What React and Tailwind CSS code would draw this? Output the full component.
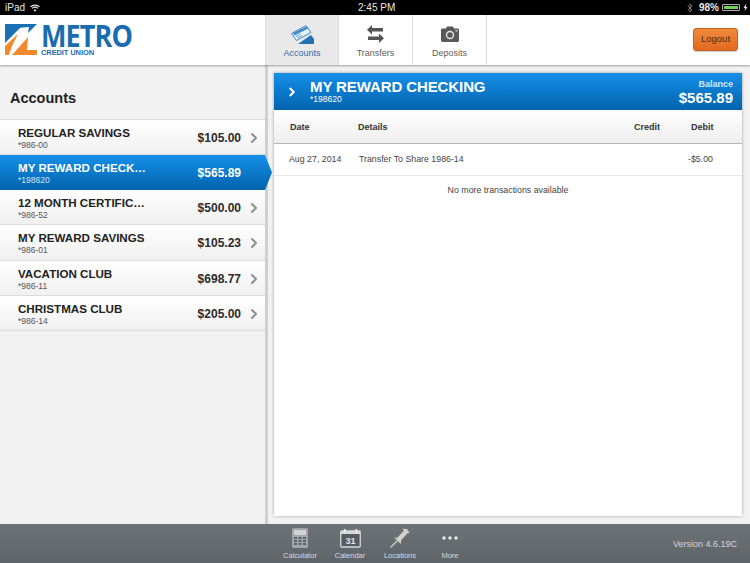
import { ChevronRight, Bluetooth } from 'lucide-react';

const accounts = [
  { name: 'REGULAR SAVINGS', no: '*986-00', amount: '$105.00', h: 'h-[35px]' },
  { name: 'MY REWARD CHECK…', no: '*198620', amount: '$565.89', h: 'h-[35px]', active: true },
  { name: '12 MONTH CERTIFIC…', no: '*986-52', amount: '$500.00', h: 'h-[35px]' },
  { name: 'MY REWARD SAVINGS', no: '*986-01', amount: '$105.23', h: 'h-[36px]' },
  { name: 'VACATION CLUB', no: '*986-11', amount: '$698.77', h: 'h-[35px]' },
  { name: 'CHRISTMAS CLUB', no: '*986-14', amount: '$205.00', h: 'h-[35px]' },
];

function StatusBar() {
  return (
    <div className="h-[15px] bg-black text-[#e8e8e8] text-[10px] leading-[15px] flex items-center justify-between pl-[5px] pr-[2px] relative">
      <div className="flex items-center gap-[5px]">
        <span>iPad</span>
        <svg width="10" height="8" viewBox="0 0 10 8" fill="none" stroke="#e8e8e8">
          <path d="M0.6 2.8C3 0.5 7 0.5 9.4 2.8" strokeWidth="1.2" />
          <path d="M2.2 4.4C3.8 3 6.2 3 7.8 4.4" strokeWidth="1.2" />
          <path d="M5 7.6L3.6 6C4.4 5.3 5.6 5.3 6.4 6Z" fill="#e8e8e8" strokeWidth="0.3" />
        </svg>
      </div>
      <span className="absolute left-[358px] top-0 font-medium">2:45 PM</span>
      <div className="flex items-center gap-[3px]">
        <Bluetooth size={10} className="text-[#8a8a8a] mr-[1px]" />
        <span className="font-bold">98%</span>
        <div className="w-[18px] h-[7px] border border-[#aaa] rounded-[1px] p-[1px]">
          <div className="h-full w-[14px] bg-[#6fd05a]" />
        </div>
        <svg width="5" height="7" viewBox="0 0 5 7"><path d="M3 0L0.5 4H2L1.6 7L4.5 3H3Z" fill="#ddd" /></svg>
      </div>
    </div>
  );
}

function Logo() {
  return (
    <div className="w-[265px] flex items-start pl-[5px] pt-[9px] gap-[4px]">
      <svg width="32" height="31" viewBox="0 0 32 31">
        <path d="M0 0H32L23 9L24 3L13 4L0 17Z" fill="#1a6fb5" />
        <path d="M0 0H15V4L0 19Z" fill="#1a6fb5" />
        <path d="M0 31V22L13 10L7 22L4 31Z" fill="#f08a2c" />
        <path d="M7 31L23 13L22 26H32V31Z" fill="#f08a2c" />
      </svg>
      <div className="text-[#1a6cb0] leading-none">
        <div className="text-[30px] font-bold h-[24px] leading-[24px] tracking-[-1px] scale-x-[0.9] origin-left font-['Open_Sans','Liberation_Sans',sans-serif]">METRO</div>
        <div className="text-[7.5px] font-bold mt-[1px] tracking-[-0.1px]">CREDIT UNION</div>
      </div>
    </div>
  );
}

function Tab({ label, active, children, width }) {
  return (
    <div className={`${width} h-full flex flex-col items-center border-r border-[#dcdcdc] ${active ? 'bg-[#e9e9e9]' : 'bg-white'}`}>
      <div className="h-[30px] mt-[4px] flex items-center justify-center">{children}</div>
      <span className={`text-[9px] leading-[11px] mt-[-1px] ${active ? 'text-[#2f6ea5]' : 'text-[#5e5e5e]'}`}>{label}</span>
    </div>
  );
}

function Header() {
  return (
    <div className="h-[50px] bg-white flex shadow-[0_1px_2px_rgba(0,0,0,0.35)] relative z-10">
      <Logo />
      <div className="flex border-l border-[#dcdcdc]">
        <Tab label="Accounts" active width="w-[73px]">
          <svg width="23" height="19" viewBox="0 0 23 19">
            <path d="M0.5 8.5L15 0.5L20 7.5L5.5 15.5Z" fill="#e6f0f8" stroke="#3f8ac6" strokeWidth="1" />
            <path d="M2 8L15.5 1.5L17 3.5L3.5 10.5Z" fill="#3f8ac6" />
            <path d="M5 11.5L9.5 9M6.5 13L11 10.5" stroke="#3f8ac6" strokeWidth="0.8" />
            <path d="M7 19L20 10L23 14V19Z" fill="#2372b2" />
          </svg>
        </Tab>
        <Tab label="Transfers" width="w-[74px]">
          <svg width="17" height="18" viewBox="0 0 17 18" fill="#555">
            <path d="M5 0V3H16V6.5H5V9.5L0 4.8Z" />
            <path d="M12 8.5V11.5H1V15H12V18L17 13.2Z" />
          </svg>
        </Tab>
        <Tab label="Deposits" width="w-[74px]">
          <svg width="18" height="16" viewBox="0 0 18 16">
            <path d="M1.5 2.5H5L6 0.5H12L13 2.5H16.5C17.3 2.5 18 3.2 18 4V14.5C18 15.3 17.3 16 16.5 16H1.5C0.7 16 0 15.3 0 14.5V4C0 3.2 0.7 2.5 1.5 2.5Z" fill="#595959" />
            <circle cx="9" cy="9" r="4.2" fill="#e6e6e6" />
            <circle cx="9" cy="9" r="2.8" fill="#595959" />
            <rect x="14.5" y="4" width="2" height="1.5" fill="#ddd" />
          </svg>
        </Tab>
      </div>
      <div className="flex-1 flex items-start justify-end pr-[12px] pt-[13px]">
        <button className="w-[45px] h-[23px] rounded-[3px] border border-[#c9601a] bg-gradient-to-b from-[#f08a3c] to-[#e2691e] text-[9.5px] text-[#4a2a14] shadow-[0_1px_1px_rgba(0,0,0,0.2)]">
          Logout
        </button>
      </div>
    </div>
  );
}

function AccountRow({ account }) {
  if (account.active) {
    return (
      <div className={`${account.h} relative flex items-center pl-[18px] pr-[24px] bg-gradient-to-b from-[#1590e8] to-[#0463ae] text-white`}>
        <div className="flex-1 min-w-0 pt-[1px]">
          <div className="text-[11.6px] font-bold leading-[14px]">{account.name}</div>
          <div className="text-[8.5px] leading-[10px] text-[#cfe6f8]">{account.no}</div>
        </div>
        <span className="text-[12px] font-bold mt-[1px]">{account.amount}</span>
        <div className="absolute left-full top-0 h-full w-[7px] bg-gradient-to-b from-[#1590e8] to-[#0463ae] [clip-path:polygon(0_0,100%_50%,0_100%)]" />
      </div>
    );
  }
  return (
    <div className={`${account.h} flex items-center pl-[18px] pr-[3px] bg-gradient-to-b from-white to-[#f0f0f0] border-b border-[#dcdcdc]`}>
      <div className="flex-1 min-w-0 pt-[1px]">
        <div className="text-[11.6px] font-bold leading-[14px] text-[#222]">{account.name}</div>
        <div className="text-[8.5px] leading-[10px] text-[#555]">{account.no}</div>
      </div>
      <span className="text-[12px] font-bold text-[#2b2b2b] mt-[1px]">{account.amount}</span>
      <ChevronRight size={16} strokeWidth={3} className="text-[#8f8f8f] ml-[5px] mt-[1px]" />
    </div>
  );
}

function Sidebar() {
  return (
    <div className="w-[265px] shrink-0 relative z-[5]">
      <div className="h-[55px] flex items-center pl-[10px] pt-[14px] border-b border-[#dedede] text-[14.5px] font-bold text-[#222]">Accounts</div>
      {accounts.map((a) => (
        <AccountRow key={a.name} account={a} />
      ))}
    </div>
  );
}

function Detail() {
  return (
    <div className="ml-[6px] mt-[8px] mb-[8px] w-[468px] bg-white flex flex-col shadow-[0_0_3px_rgba(0,0,0,0.35)]">
      <div className="h-[37px] flex items-center bg-gradient-to-b from-[#1590e8] to-[#0463ae] text-white pl-[11px] pr-[9px]">
        <ChevronRight size={14} strokeWidth={3.5} />
        <div className="ml-[11px] flex-1">
          <div className="text-[15px] font-bold leading-[17px] tracking-[-0.1px] mt-[-1px]">MY REWARD CHECKING</div>
          <div className="text-[8.5px] leading-[9px] font-medium">*198620</div>
        </div>
        <div className="text-right pt-[2px]">
          <div className="text-[9px] font-bold leading-[10px] text-[#d4e9fa]">Balance</div>
          <div className="text-[15px] font-bold leading-[17px]">$565.89</div>
        </div>
      </div>
      <div className="h-[34px] grid grid-cols-[68px_276px_57px_1fr] items-center pl-[16px] pt-[3px] bg-gradient-to-b from-white to-[#eeeeee] border-b border-[#b5b5b5] text-[9px] font-bold text-[#333]">
        <span>Date</span>
        <span>Details</span>
        <span>Credit</span>
        <span>Debit</span>
      </div>
      <div className="h-[32px] grid grid-cols-[70px_274px_55px_1fr] items-center pl-[15px] border-b border-[#e6e6e6] text-[8.8px] text-[#444]">
        <span>Aug 27, 2014</span>
        <span>Transfer To Share 1986-14</span>
        <span />
        <span>-$5.00</span>
      </div>
      <div className="text-center text-[8.8px] text-[#444] pt-[8px]">No more transactions available</div>
    </div>
  );
}

function FooterItem({ label, children }) {
  return (
    <div className="w-[50px] flex flex-col items-center">
      <div className="h-[22px] flex items-center justify-center">{children}</div>
      <span className="text-[7.5px] leading-[9px] mt-[2px] text-[#d8dbdd]">{label}</span>
    </div>
  );
}

function Footer() {
  return (
    <div className="h-[39px] bg-gradient-to-b from-[#6e7377] to-[#5f6468] relative flex items-start justify-center pt-[3px]">
      <div className="flex">
        <FooterItem label="Calculator">
          <svg width="16" height="20" viewBox="0 0 16 20">
            <rect width="16" height="20" rx="1.5" fill="#a3a6a8" />
            <rect x="2" y="2" width="12" height="5" fill="#d0d2d3" />
            {[9, 12, 15].map((y) =>
              [2, 6.5, 11].map((x) => <rect key={`${x}-${y}`} x={x} y={y} width="3" height="2" fill="#5f6366" />)
            )}
          </svg>
        </FooterItem>
        <FooterItem label="Calendar">
          <svg width="21" height="19" viewBox="0 0 21 19">
            <rect x="0.75" y="2" width="19.5" height="16" rx="1" fill="#565b5f" stroke="#d8dada" strokeWidth="1.3" />
            <rect x="0.75" y="2" width="19.5" height="3" fill="#d8dada" />
            <rect x="4" y="0" width="1.5" height="4" fill="#eeeeee" />
            <rect x="15.5" y="0" width="1.5" height="4" fill="#eeeeee" />
            <text x="10.5" y="15" textAnchor="middle" fontSize="9" fontWeight="700" fill="#e2e3e4" fontFamily="Liberation Sans">31</text>
          </svg>
        </FooterItem>
        <FooterItem label="Locations">
          <svg width="20" height="20" viewBox="0 0 20 20">
            <path d="M0.5 19.5L7.5 12.5" stroke="#c8cacb" strokeWidth="1.4" />
            <path d="M4 9.5L7 10L14 2.5L12 0.8L17 1L19.5 5L17.5 5.2L11 12.5L11 16Z" fill="#cfd1d2" />
          </svg>
        </FooterItem>
        <FooterItem label="More">
          <svg width="16" height="4" viewBox="0 0 16 4" fill="#eceded">
            <circle cx="2" cy="2" r="1.7" />
            <circle cx="8" cy="2" r="1.7" />
            <circle cx="14" cy="2" r="1.7" />
          </svg>
        </FooterItem>
      </div>
      <span className="absolute right-[13px] top-[14px] text-[9px] text-[#d4d6d8]">Version 4.6.19C</span>
    </div>
  );
}

export default function App() {
  return (
    <div className="w-[750px] h-[563px] flex flex-col overflow-hidden font-['Liberation_Sans',Arial,sans-serif] bg-[#f2f2f2]">
      <StatusBar />
      <Header />
      <div className="h-[459px] flex">
        <Sidebar />
        <div className="w-[3px] bg-[#cfcfcf] shrink-0" />
        <Detail />
      </div>
      <Footer />
    </div>
  );
}
